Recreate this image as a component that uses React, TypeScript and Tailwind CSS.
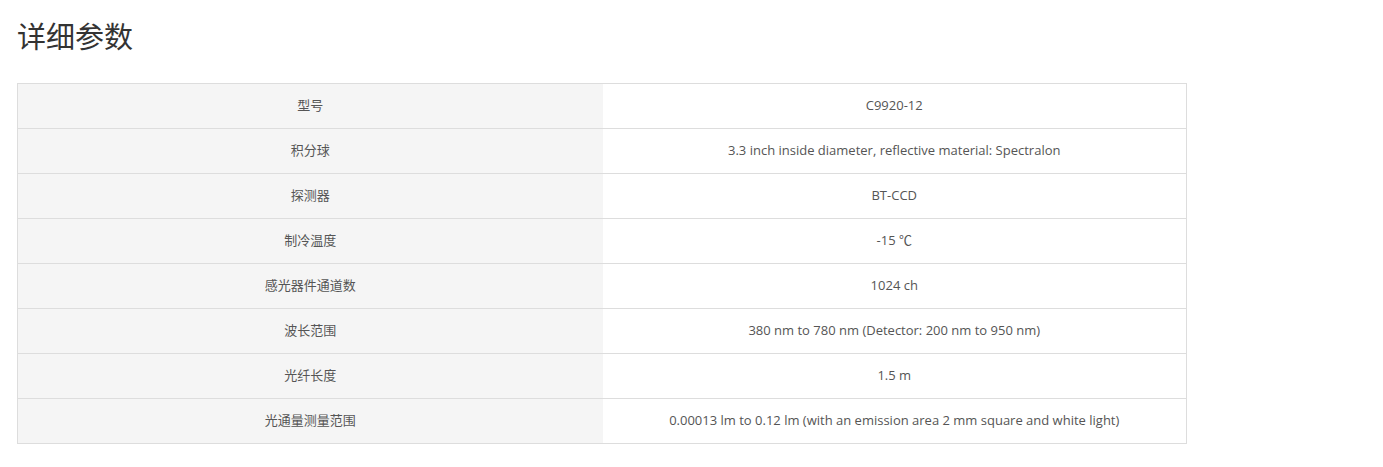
const rows: [string, string][] = [
  ["型号", "C9920-12"],
  ["积分球", "3.3 inch inside diameter, reflective material: Spectralon"],
  ["探测器", "BT-CCD"],
  ["制冷温度", "-15 ℃"],
  ["感光器件通道数", "1024 ch"],
  ["波长范围", "380 nm to 780 nm (Detector: 200 nm to 950 nm)"],
  ["光纤长度", "1.5 m"],
  ["光通量测量范围", "0.00013 lm to 0.12 lm (with an emission area 2 mm square and white light)"],
];

export default function App() {
  return (
    <div
      className="w-[1383px] h-[467px] bg-white pl-[17px] pt-[17px]"
      style={{ fontFamily: '"Open Sans", "Noto Sans CJK SC", sans-serif' }}
    >
      <h2 className="text-[29px] leading-[40px] text-[#333] font-normal">详细参数</h2>
      <table className="mt-[26px] w-[1170px] border-collapse border border-[#ddd] text-[13px] text-[#555]">
        <tbody>
          {rows.map(([k, v]) => (
            <tr key={k} className="h-[45px]">
              <td className="w-[585px] bg-[#f5f5f5] border-y border-[#ddd] text-center">{k}</td>
              <td className="border-y border-[#ddd] text-center">{v}</td>
            </tr>
          ))}
        </tbody>
      </table>
    </div>
  );
}
